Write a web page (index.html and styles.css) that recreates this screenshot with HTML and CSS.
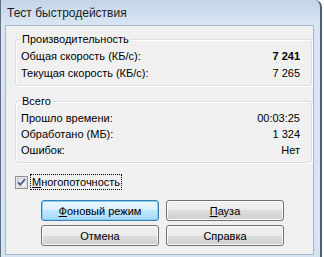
FILE: index.html
```html
<!doctype html>
<html lang="ru">
  <head>
    <meta charset="UTF-8" />
    <title>Тест быстродействия</title>
    <link rel="stylesheet" href="styles.css">
  </head>
  <body>
    <div class="window">
      <div class="titlebar">Тест быстродействия</div>
      <div class="client">
        <fieldset class="group group-speed">
          <legend>Производительность</legend>
          <div class="row">
            <span>Общая скорость (КБ/с):</span>
            <span class="value bold">7 241</span>
          </div>
          <div class="row">
            <span>Текущая скорость (КБ/с):</span>
            <span class="value">7 265</span>
          </div>
        </fieldset>

        <fieldset class="group group-total">
          <legend>Всего</legend>
          <div class="row">
            <span>Прошло времени:</span>
            <span class="value">00:03:25</span>
          </div>
          <div class="row">
            <span>Обработано (МБ):</span>
            <span class="value">1 324</span>
          </div>
          <div class="row">
            <span>Ошибок:</span>
            <span class="value">Нет</span>
          </div>
        </fieldset>

        <label class="check">
          <span class="check-box">
            <svg width="13" height="13" viewBox="0 0 13 13">
              <defs>
                <linearGradient id="boxFill" x1="0" y1="0" x2="1" y2="1">
                  <stop offset="0" stop-color="#dcdcdc" />
                  <stop offset="1" stop-color="#fbfbfb" />
                </linearGradient>
              </defs>
              <rect x="0.5" y="0.5" width="12" height="12" fill="#f4f4f4" stroke="#8e8f8f" />
              <rect x="2" y="2" width="9" height="9" fill="url(#boxFill)" stroke="#c4c4c4" stroke-width="0.6" />
              <path d="M3 6.2 L5.3 8.8 L10 3.2" fill="none" stroke="#4a5f97" stroke-width="1.8" />
            </svg>
          </span>
          <span class="check-label"><u>М</u>ногопоточность</span>
        </label>

        <div class="buttons">
          <button class="btn btn-default"><u>Ф</u>оновый режим</button>
          <button class="btn"><u>П</u>ауза</button>
          <button class="btn">Отмена</button>
          <button class="btn">Справка</button>
        </div>
      </div>
    </div>
  </body>
</html>
```

FILE: styles.css
```css
body {
  margin: 0;
  background-color: #fff;
  font-family: 'Liberation Sans', Arial, sans-serif;
  font-size: 11px;
  color: #000;
  overflow: hidden;
}

.window {
  width: 319px;
  height: 262px;
  border-left: 1px solid #5f7085;
  border-right: 2px solid #4e5d6e;
  border-top-right-radius: 7px;
  background: linear-gradient(#c3d5e9, #d9e5f2 25px, #d6e3f1);
}

.titlebar {
  height: 25px;
  padding-left: 6px;
  font-size: 12px;
  line-height: 26px;
  color: #1e1e1e;
}

.client {
  width: 307px;
  height: 228px;
  margin-left: 4px;
  border: 1px solid #a7b6c8;
  background-color: #f0f0f0;
}

.group {
  width: 279px;
  margin: 7px 0 0 9px;
  padding: 2px 11px 3px 5px;
  border: 1px solid #d5dfe5;
  border-radius: 3px;
  box-shadow: inset 1px 1px 0 #fff, 1px 1px 0 #fff;
}

.group legend {
  padding: 0 1px;
  line-height: 13px;
}

.group-total {
  margin-top: 9px;
  padding-bottom: 4px;
}

.row {
  display: flex;
  justify-content: space-between;
  line-height: 17px;
}

.group-total .row {
  line-height: 16px;
}

.bold {
  font-weight: bold;
}

.check {
  display: flex;
  align-items: center;
  margin: 11px 0 0 9px;
  height: 16px;
}

.check-box {
  display: flex;
  width: 13px;
  height: 13px;
}

.check-label {
  margin-left: 3px;
  padding: 0 1px;
  line-height: 14px;
  outline: 1px dotted #000;
}

.buttons {
  display: grid;
  grid-template-columns: 118px 118px;
  grid-auto-rows: 21px;
  column-gap: 7px;
  row-gap: 4px;
  margin: 10px 0 0 35px;
}

.btn {
  margin: 0;
  padding: 0;
  font-family: 'Liberation Sans', Arial, sans-serif;
  font-size: 11px;
  color: #000;
  border: 1px solid #707070;
  border-radius: 3px;
  background: linear-gradient(#f2f2f2, #ebebeb 50%, #dddddd 50%, #cfcfcf);
  box-shadow: inset 0 0 0 1px #fcfcfc;
}

.btn-default {
  border-color: #3c7fb1;
  background: linear-gradient(#eaf6fd, #d9f0fc 50%, #bee6fd 50%, #a7d9f5);
  box-shadow: inset 0 0 0 1px #7fd0f4;
}
```
